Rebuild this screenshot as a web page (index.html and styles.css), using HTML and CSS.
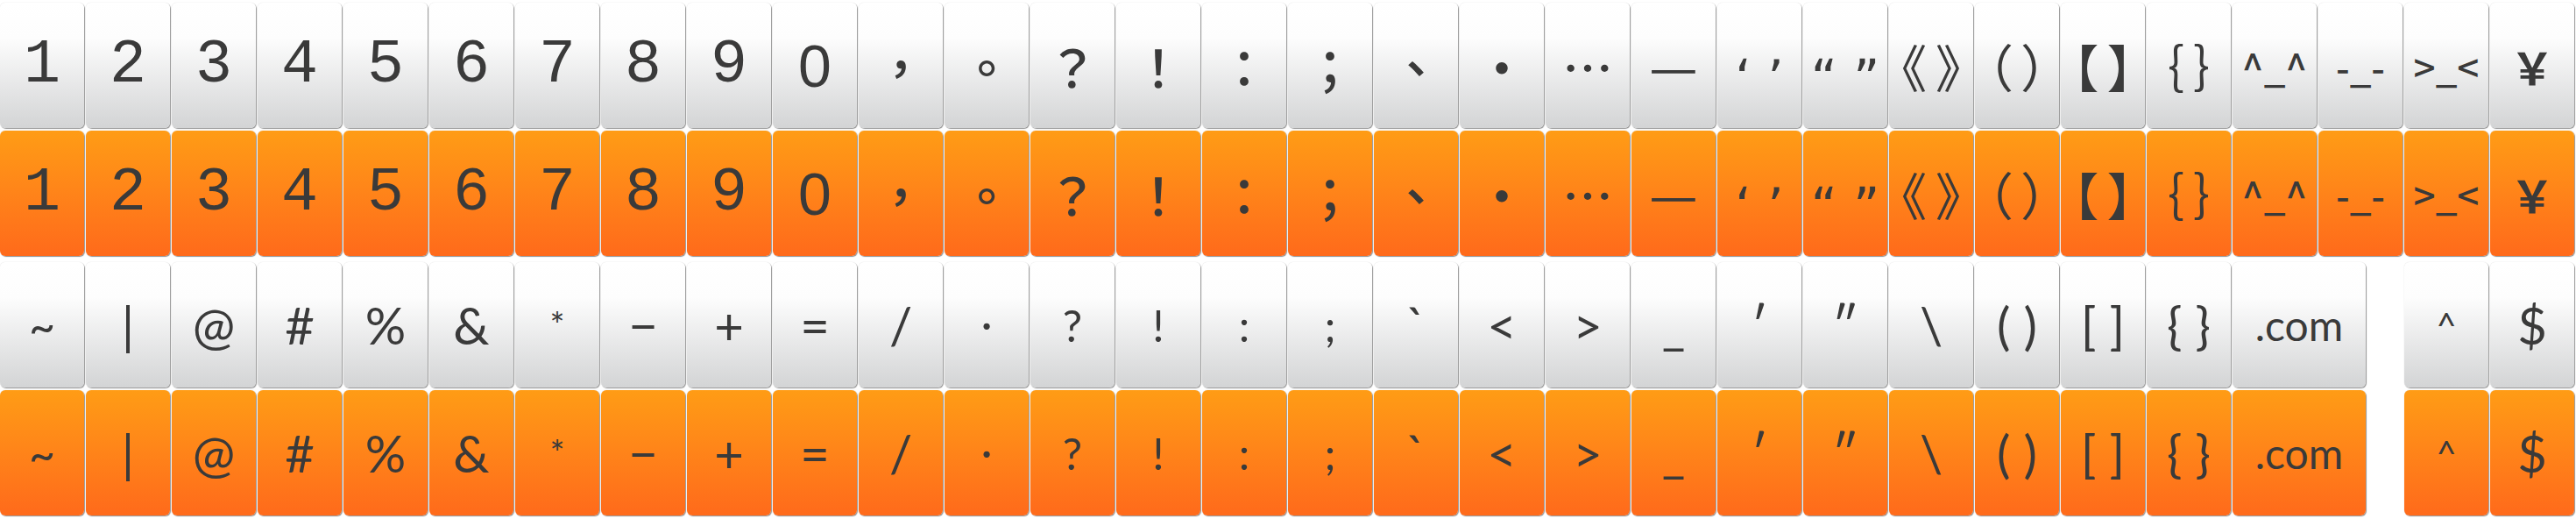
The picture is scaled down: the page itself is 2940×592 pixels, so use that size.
FILE: index.html
```html
<!DOCTYPE html>
<html lang="zh-Hant">
<head>
<meta charset="utf-8">
<title>Symbol keyboard</title>
<link rel="stylesheet" href="styles.css">
</head>
<body>
<main class="board">
  <section class="block">
    <div class="row">
      <div class="key gray num">1</div><div class="key gray num">2</div><div class="key gray num">3</div><div class="key gray num">4</div><div class="key gray num">5</div><div class="key gray num">6</div><div class="key gray num">7</div><div class="key gray num">8</div><div class="key gray num">9</div><div class="key gray num zero">0</div>
      <div class="key gray cjk">，</div><div class="key gray cjk">。</div><div class="key gray cjk">？</div><div class="key gray cjk">！</div><div class="key gray cjk">：</div><div class="key gray cjk">；</div><div class="key gray cjk">、</div><div class="key gray cjk">•</div><div class="key gray cjk">…</div><div class="key gray cjk dash">—</div><div class="key gray q">‘ ’</div><div class="key gray q">“ ”</div>
      <div class="key gray cjk pair"><span>《</span><span>》</span></div><div class="key gray cjk pair"><span>（</span><span>）</span></div><div class="key gray cjk pair"><span>【</span><span>】</span></div><div class="key gray cjk pair"><span>｛</span><span>｝</span></div>
      <div class="key gray emo">^_^</div><div class="key gray emo">-_-</div><div class="key gray emo">&gt;_&lt;</div><div class="key gray yen">￥</div>
    </div>
    <div class="row">
      <div class="key orange num">1</div><div class="key orange num">2</div><div class="key orange num">3</div><div class="key orange num">4</div><div class="key orange num">5</div><div class="key orange num">6</div><div class="key orange num">7</div><div class="key orange num">8</div><div class="key orange num">9</div><div class="key orange num zero">0</div>
      <div class="key orange cjk">，</div><div class="key orange cjk">。</div><div class="key orange cjk">？</div><div class="key orange cjk">！</div><div class="key orange cjk">：</div><div class="key orange cjk">；</div><div class="key orange cjk">、</div><div class="key orange cjk">•</div><div class="key orange cjk">…</div><div class="key orange cjk dash">—</div><div class="key orange q">‘ ’</div><div class="key orange q">“ ”</div>
      <div class="key orange cjk pair"><span>《</span><span>》</span></div><div class="key orange cjk pair"><span>（</span><span>）</span></div><div class="key orange cjk pair"><span>【</span><span>】</span></div><div class="key orange cjk pair"><span>｛</span><span>｝</span></div>
      <div class="key orange emo">^_^</div><div class="key orange emo">-_-</div><div class="key orange emo">&gt;_&lt;</div><div class="key orange yen">￥</div>
    </div>
  </section>
  <section class="block">
    <div class="row">
      <div class="key gray sym tilde">~</div><div class="key gray sym">|</div><div class="key gray sym">@</div><div class="key gray sym">#</div><div class="key gray sym">%</div><div class="key gray sym">&amp;</div><div class="key gray sym small">*</div><div class="key gray sym">−</div><div class="key gray sym">+</div><div class="key gray sym">=</div><div class="key gray sym">/</div><div class="key gray sym dot">.</div><div class="key gray sym mid">?</div><div class="key gray sym mid">!</div><div class="key gray sym mid">:</div><div class="key gray sym mid">;</div><div class="key gray sym">`</div><div class="key gray sym">&lt;</div><div class="key gray sym">&gt;</div><div class="key gray sym">_</div><div class="key gray sym">′</div><div class="key gray sym">″</div><div class="key gray sym">\</div><div class="key gray sym">( )</div><div class="key gray sym">[ ]</div><div class="key gray sym">{ }</div>
      <div class="key gray sym wide">.com</div>
      <div class="key gray sym small push">^</div><div class="key gray sym">$</div>
    </div>
    <div class="row">
      <div class="key orange sym tilde">~</div><div class="key orange sym">|</div><div class="key orange sym">@</div><div class="key orange sym">#</div><div class="key orange sym">%</div><div class="key orange sym">&amp;</div><div class="key orange sym small">*</div><div class="key orange sym">−</div><div class="key orange sym">+</div><div class="key orange sym">=</div><div class="key orange sym">/</div><div class="key orange sym dot">.</div><div class="key orange sym mid">?</div><div class="key orange sym mid">!</div><div class="key orange sym mid">:</div><div class="key orange sym mid">;</div><div class="key orange sym">`</div><div class="key orange sym">&lt;</div><div class="key orange sym">&gt;</div><div class="key orange sym">_</div><div class="key orange sym">′</div><div class="key orange sym">″</div><div class="key orange sym">\</div><div class="key orange sym">( )</div><div class="key orange sym">[ ]</div><div class="key orange sym">{ }</div>
      <div class="key orange sym wide">.com</div>
      <div class="key orange sym small push">^</div><div class="key orange sym">$</div>
    </div>
  </section>
</main>
</body>
</html>
```

FILE: styles.css
```css
html, body {
  margin: 0;
  padding: 0;
  background: #ffffff;
}

.board {
  width: 2940px;
  height: 592px;
  display: flex;
  flex-direction: column;
}

.block {
  height: 296px;
  box-sizing: border-box;
  padding-top: 3px;
  display: flex;
  flex-direction: column;
  gap: 3px;
}

.row {
  display: flex;
  gap: 2px;
  height: 143px;
}

.key {
  flex: 0 0 96px;
  width: 96px;
  height: 143px;
  box-sizing: border-box;
  border-radius: 6px;
  display: flex;
  align-items: center;
  justify-content: center;
  color: #3a3a3a;
  line-height: 1;
  white-space: pre;
  overflow: hidden;
  box-shadow: 1px 1px 1px rgba(0, 0, 0, 0.4), 0 0 1px rgba(0, 0, 0, 0.25);
}

.gray {
  background: linear-gradient(to bottom, #ffffff 0%, #fdfdfd 28%, #d3d4d5 100%);
}

.orange {
  background: linear-gradient(to bottom, #ff9c15 0%, #ff8619 45%, #ff6a1b 100%);
}

.num {
  font-family: "Liberation Mono", "DejaVu Sans Mono", monospace;
  font-size: 70px;
}

.num.zero {
  font-family: "Liberation Sans", "Noto Sans", sans-serif;
  font-size: 68px;
}

.cjk {
  font-family: "Noto Sans CJK TC", "Noto Sans CJK SC", sans-serif;
  font-size: 58px;
  font-weight: 500;
}

.cjk.dash {
  font-weight: 400;
  font-size: 62px;
  padding-bottom: 6px;
}

.pair {
  font-feature-settings: "palt" 1;
  font-weight: 400;
  gap: 12px;
}

.q {
  font-family: "DejaVu Sans", "Noto Sans", sans-serif;
  font-size: 58px;
  padding-top: 30px;
}

.emo {
  font-family: "Noto Sans CJK TC", "Noto Sans", sans-serif;
  font-size: 44px;
  font-weight: 500;
}

.yen {
  font-family: "Noto Sans CJK TC", "Noto Sans CJK SC", sans-serif;
  font-size: 50px;
  font-weight: 700;
}

.sym {
  font-family: "Lato", "Noto Sans", sans-serif;
  font-size: 58px;
  font-weight: 400;
}

.sym.tilde {
  font-size: 52px;
}

.sym.small {
  font-size: 40px;
}

.sym.mid {
  font-size: 50px;
}

.sym.dot {
  padding-bottom: 34px;
}

.sym.wide {
  flex: 0 0 152px;
  width: 152px;
  font-size: 48px;
}

.push {
  margin-left: 42px;
}
```
